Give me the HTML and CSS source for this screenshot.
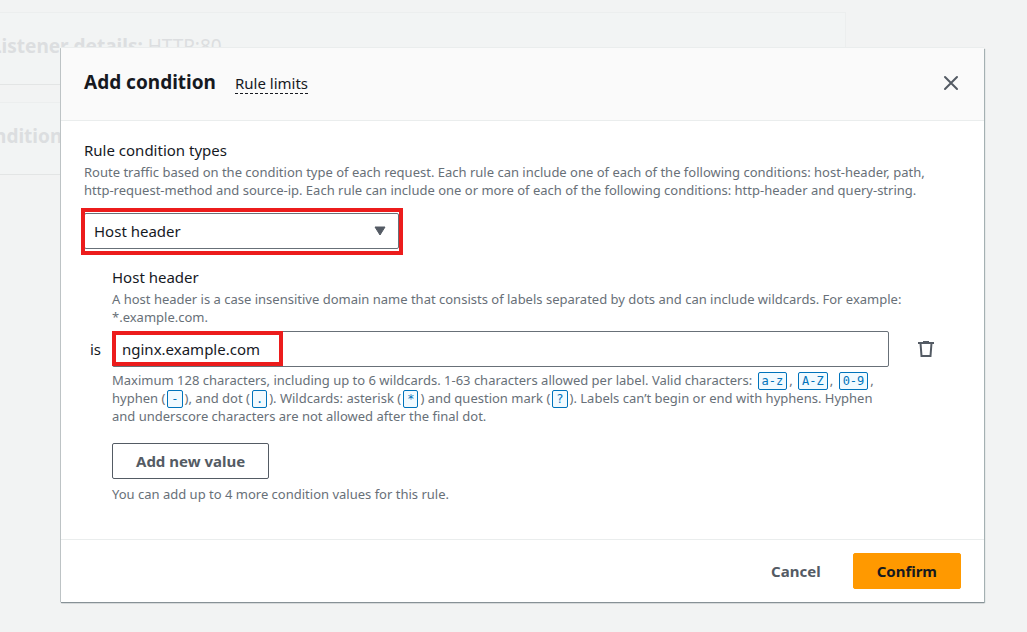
FILE: index.html
```html
<!DOCTYPE html>
<html lang="en">
<head>
<meta charset="utf-8">
<title>Add condition</title>
<link rel="stylesheet" href="styles.css">
</head>
<body>
<div class="backdrop" aria-hidden="true">
  <div class="panel"><span class="panel-title"><b>Listener details:</b> HTTP:80</span></div>
  <div class="panel"><span class="panel-title panel-title-cut"><b>Conditions</b></span></div>
</div>
<main class="dialog" role="dialog" aria-labelledby="dialog-title">
  <header class="dialog-header">
    <h1 id="dialog-title">Add condition</h1>
    <a class="limits" href="#">Rule limits</a>
    <button class="icon-button close" type="button" aria-label="Close">
      <svg width="16" height="16" viewBox="0 0 16 16" fill="none" stroke="#545b64" stroke-width="2" stroke-linecap="round"><path d="M2 2l12 12M14 2L2 14"/></svg>
    </button>
  </header>
  <section class="dialog-body">
    <label class="label" for="type">Rule condition types</label>
    <p class="hint">Route traffic based on the condition type of each request. Each rule can include one of each of the following conditions: host-header, path,<br>http-request-method and source-ip. Each rule can include one or more of each of the following conditions: http-header and query-string.</p>
    <div class="select-wrap">
      <select id="type"><option>Host header</option></select>
      <svg class="caret" width="12" height="10" viewBox="0 0 12 10"><path d="M1 1h10L6 9z" fill="#545b64" stroke="#545b64" stroke-linejoin="round"/></svg>
      <span class="mark mark-select"></span>
    </div>
    <div class="condition">
      <label class="label" for="host">Host header</label>
      <p class="hint">A host header is a case insensitive domain name that consists of labels separated by dots and can include wildcards. For example:<br>*.example.com.</p>
      <div class="value-row">
        <span class="operator">is</span>
        <div class="input-wrap">
          <input id="host" type="text" value="nginx.example.com">
          <span class="mark mark-input"></span>
        </div>
        <button class="icon-button trash" type="button" aria-label="Remove value">
          <svg width="16" height="16" viewBox="0 0 16 16" fill="none" stroke="#545b64" stroke-width="2"><path d="M0 2h16M5 1h6M2.500 2l1 13h9l1-13"/></svg>
        </button>
      </div>
      <p class="hint constraint">Maximum 128 characters, including up to 6 wildcards. 1-63 characters allowed per label. Valid characters: <code>a-z</code>, <code>A-Z</code>, <code>0-9</code>,<br>hyphen (<code>-</code>), and dot (<code>.</code>). Wildcards: asterisk (<code>*</code>) and question mark (<code>?</code>). Labels can’t begin or end with hyphens. Hyphen<br>and underscore characters are not allowed after the final dot.</p>
      <button class="button add" type="button">Add new value</button>
      <p class="hint">You can add up to 4 more condition values for this rule.</p>
    </div>
  </section>
  <footer class="dialog-footer">
    <button class="button link" type="button">Cancel</button>
    <button class="button primary" type="button">Confirm</button>
  </footer>
</main>
</body>
</html>
```
FILE: styles.css
```css
* { box-sizing: border-box; }
body {
  margin: 0;
  min-height: 100vh;
  background: #f2f3f3;
  color: #16191f;
  font: 15px/22px "Noto Sans", "Open Sans", sans-serif;
  overflow: hidden;
}
.backdrop {
  position: absolute;
  inset: 12px 181px auto 0;
  display: grid;
  gap: 17px;
}
.panel {
  display: flex;
  align-items: center;
  height: 73px;
  padding-bottom: 6px;
  border: 1px solid #eceeee;
  border-left: 0;
  border-bottom-color: #e3e5e5;
  background: #f2f4f4;
  overflow: hidden;
}
.panel-title {
  margin-left: -9px;
  color: #dcdee0;
  font-size: 19px;
  white-space: nowrap;
}
.panel-title-cut { margin-left: -30px; }
.dialog {
  position: relative;
  margin: 48px 43px 30px 61px;
  background: #fff;
  box-shadow: 0 1px 1px #879196, 1px 1px 1px #aab7b8, -1px 0 0 #c8cecf, 0 -1px 0 #eaeded;
}
.dialog-header {
  display: flex;
  align-items: center;
  height: 73px;
  padding: 0 23px;
  border-bottom: 1px solid #eaeded;
  background: #fafafa;
}
h1 {
  margin: 0 19px 4px 0;
  font-size: 19px;
  line-height: 24px;
  font-weight: 700;
}
.limits {
  margin-bottom: 2px;
  border-bottom: 1px dashed #16191f;
  color: #16191f;
  line-height: 20px;
  text-decoration: none;
}
.icon-button {
  display: flex;
  padding: 0;
  border: 0;
  background: none;
}
.close { margin: 0 2px 2px auto; }
.trash { margin-right: 1px; }
.dialog-body { padding: 18px 23px 36px; }
.label { display: block; }
.hint {
  margin: 2px 0 0;
  color: #687078;
  font-size: 13px;
  line-height: 18px;
  white-space: nowrap;
}
.select-wrap {
  position: relative;
  width: 315px;
  margin-top: 14px;
}
select, input {
  display: block;
  width: 100%;
  height: 36px;
  padding: 0 9px;
  border: 1px solid #687078;
  border-radius: 2px;
  background: #fff;
  color: #16191f;
  font: inherit;
  appearance: none;
}
.caret {
  position: absolute;
  right: 13px;
  top: 13px;
}
.mark {
  position: absolute;
  border: 4px solid #ec1c1c;
  pointer-events: none;
}
.mark-select { inset: -5px -4px -6px -3px; }
.mark-input { left: 0; top: 0; width: 171px; height: 35px; }
.condition { margin: 17px 0 0 28px; }
.value-row {
  display: flex;
  align-items: center;
  margin: 5px 26px 0 -28px;
}
.operator { width: 28px; padding-left: 6px; }
.input-wrap {
  position: relative;
  flex: 1;
  margin-right: 29px;
}
.constraint { margin-top: 4px; }
code {
  margin: 0 2px;
  padding: 1px 3px;
  border: 1px solid #0073bb;
  border-radius: 2px;
  background: #f1faff;
  color: #0073bb;
  font: 12px/14px "DejaVu Sans Mono", monospace;
}
.button {
  height: 36px;
  padding: 0 23px;
  border: 1px solid #545b64;
  border-radius: 2px;
  background: #fff;
  color: #545b64;
  font: inherit;
  font-weight: 700;
}
.add { margin: 18px 0 4px; }
.dialog-footer {
  display: flex;
  justify-content: flex-end;
  gap: 8px;
  padding: 13px 23px;
  border-top: 1px solid #eaeded;
}
.link { border-color: transparent; }
.primary {
  border-color: #f90;
  background: #f90;
  color: #16191f;
}
```
